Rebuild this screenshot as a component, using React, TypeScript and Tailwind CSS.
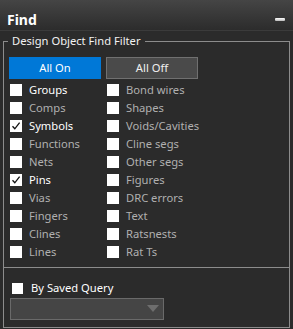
import React from 'react';

type Item = {
  label: string;
  on?: boolean;
  checked?: boolean;
};

const left: Item[] = [
  { label: 'Groups', on: true },
  { label: 'Comps' },
  { label: 'Symbols', on: true, checked: true },
  { label: 'Functions' },
  { label: 'Nets' },
  { label: 'Pins', on: true, checked: true },
  { label: 'Vias' },
  { label: 'Fingers' },
  { label: 'Clines' },
  { label: 'Lines' },
];

const right: Item[] = [
  { label: 'Bond wires' },
  { label: 'Shapes' },
  { label: 'Voids/Cavities' },
  { label: 'Cline segs' },
  { label: 'Other segs' },
  { label: 'Figures' },
  { label: 'DRC errors' },
  { label: 'Text' },
  { label: 'Ratsnests' },
  { label: 'Rat Ts' },
];

const Box = ({ checked }: { checked?: boolean }) => (
  <span className="flex h-[12px] w-[12px] shrink-0 items-center justify-center bg-white">
    {checked && (
      <svg width="10" height="10" viewBox="0 0 10 10">
        <path d="M1.5 5.2 L3.8 7.8 L8.6 1.6" fill="none" stroke="#111" strokeWidth="1.3" />
      </svg>
    )}
  </span>
);

const Row = ({ item }: { item: Item }) => (
  <div className="flex h-[18px] items-center gap-[7px]">
    <Box checked={item.checked} />
    <span className={item.on ? 'text-white' : 'text-[#b0b0b0]'}>{item.label}</span>
  </div>
);

const App = () => {
  return (
    <div
      className="h-[329px] w-[293px] overflow-hidden bg-[#2b2b2b] text-[11.2px] leading-[16px] text-white"
      style={{ fontFamily: '"Noto Sans", "Open Sans", sans-serif' }}
    >
      <div className="flex h-[31px] items-center justify-between border-b border-[#3b3b3b] bg-gradient-to-b from-[#454545] to-[#2c2c2c] pl-[7px] pr-[8px] pt-[9px]">
        <span className="text-[14px] font-bold">Find</span>
        <span className="h-[3px] w-[10px] rounded-[1px] bg-gradient-to-b from-[#ffffff] to-[#bbbbbb]" />
      </div>

      <fieldset className="mx-[3px] mt-[2px] h-[235px] border border-[#8c8c8c]">
        <legend className="ml-[4px] px-[4px] text-[#f2f2f2]">Design Object Find Filter</legend>
        <div className="ml-[5px] mt-[8px] flex gap-[5px]">
          <button className="h-[22px] w-[92px] bg-[#0078d7] text-white">All On</button>
          <button className="h-[22px] w-[92px] border border-[#707070] bg-[#4a4a4a] text-[#f0f0f0]">
            All Off
          </button>
        </div>
        <div className="ml-[6px] mt-[2px] grid grid-cols-[97px_1fr]">
          <div className="flex flex-col">
            {left.map((item) => (
              <Row key={item.label} item={item} />
            ))}
          </div>
          <div className="flex flex-col">
            {right.map((item) => (
              <Row key={item.label} item={item} />
            ))}
          </div>
        </div>
      </fieldset>

      <div className="mx-[3px] -mt-px h-[61px] border border-[#8c8c8c] pl-[8px] pt-[14px]">
        <div className="flex h-[12px] items-center gap-[8px]">
          <span className="h-[11px] w-[11px] bg-white" />
          <span className="text-white">By Saved Query</span>
        </div>
        <div className="-ml-[2px] mt-[4px] flex h-[22px] w-[154px] items-center justify-end border border-[#6a6a6a] bg-[#454545] pr-[4px]">
          <svg width="12" height="8" viewBox="0 0 12 8">
            <path d="M0 0 H12 L6 7 Z" fill="#6e6e6e" />
          </svg>
        </div>
      </div>
    </div>
  );
};

export default App;
